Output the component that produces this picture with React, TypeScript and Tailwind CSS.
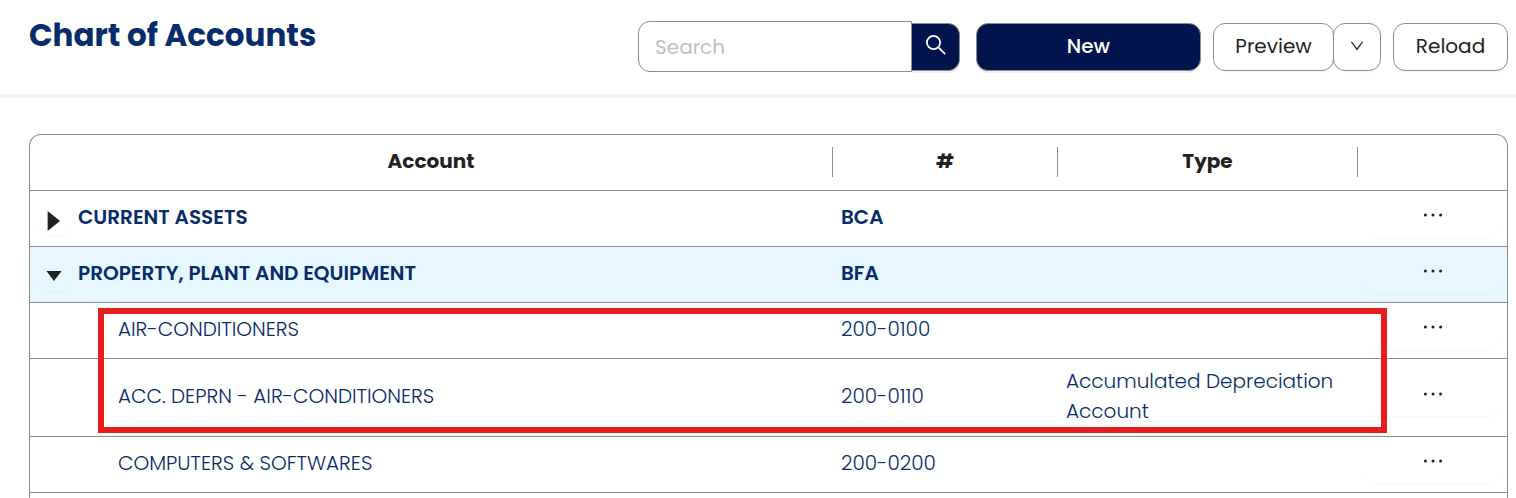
import { useState } from "react";

// ─── Data ────────────────────────────────────────────

type Account = {
  name: string;
  code: string;
  type?: string;
};

type AccountGroup = Account & { children: Account[] };

const groups: AccountGroup[] = [
  { name: "CURRENT ASSETS", code: "BCA", children: [] },
  {
    name: "PROPERTY, PLANT AND EQUIPMENT",
    code: "BFA",
    children: [
      { name: "AIR-CONDITIONERS", code: "200-0100" },
      {
        name: "ACC. DEPRN - AIR-CONDITIONERS",
        code: "200-0110",
        type: "Accumulated Depreciation Account",
      },
      { name: "COMPUTERS & SOFTWARES", code: "200-0200" },
    ],
  },
];

const cell = "h-14 border-b border-[#8c8c8c] px-2 pt-[7px] pb-[10px]";
const outlineButton =
  "h-12 rounded-xl border border-[#8c8c8c] bg-white pb-0.5 shadow-[0_2px_0_rgba(0,0,0,0.02)]";

// ─── Icons ───────────────────────────────────────────

function SearchIcon() {
  return (
    <svg className="h-5 w-5" viewBox="0 0 20 20" fill="none" stroke="currentColor" strokeWidth="1.8">
      <circle cx="7.5" cy="7.5" r="6.6" />
      <path d="M12.2 12.2 19.2 19.2" />
    </svg>
  );
}

function ChevronIcon() {
  return (
    <svg className="h-3 w-3" viewBox="0 0 12 12" fill="none" stroke="currentColor" strokeWidth="1.3">
      <path d="M0.4 1.8 6 9.4 11.6 1.8" />
    </svg>
  );
}

function DotsIcon() {
  return (
    <svg className="h-5 w-5" viewBox="0 0 20 20" fill="currentColor">
      <circle cx="2.4" cy="10" r="1.5" />
      <circle cx="10" cy="10" r="1.5" />
      <circle cx="17.6" cy="10" r="1.5" />
    </svg>
  );
}

function Triangle({ open }: { open: boolean }) {
  return (
    <svg className="h-5 w-4" viewBox="0 0 16 20" fill="currentColor">
      <path d={open ? "M0.4 4h15.2L8 14z" : "M1.6 0v20L14 10z"} />
    </svg>
  );
}

// ─── Rows ────────────────────────────────────────────

function ActionCell() {
  return (
    <td className="h-14 border-b border-[#8c8c8c] px-2 pb-2">
      <button
        type="button"
        aria-label="More actions"
        className="flex h-11 w-full items-center justify-center rounded-xl text-[#222222] shadow-[0_2px_0_rgba(0,0,0,0.02)]"
      >
        <DotsIcon />
      </button>
    </td>
  );
}

function ChildRow({ account }: { account: Account }) {
  return (
    <tr className="font-light text-[#062c6b]">
      <td className={cell}>
        <span className="block pl-20">{account.name}</span>
      </td>
      <td className={cell}>{account.code}</td>
      <td className={cell}>{account.type}</td>
      <ActionCell />
    </tr>
  );
}

// ─── Page ────────────────────────────────────────────

export default function App() {
  const [search, setSearch] = useState("");
  const [openCode, setOpenCode] = useState("BFA");

  return (
    <div className="flex h-screen flex-col overflow-hidden bg-white font-['Poppins','Inter',sans-serif] text-[20px] leading-[30px] text-[#222222]">
      <header className="flex shrink-0 items-start justify-between border-b-4 border-[#f2f2f2] pt-[21px] pr-2 pb-[22px] pl-[29px]">
        <h1 className="text-[31px] leading-7 font-bold text-[#062c6b]">Chart of Accounts</h1>

        <div className="flex items-center">
          <form className="mr-4 flex items-center" onSubmit={(e) => e.preventDefault()}>
            <input
              type="text"
              aria-label="Search"
              placeholder="Search"
              className="h-[51px] w-[274px] rounded-l-xl border border-[#8c8c8c] px-4 outline-none placeholder:text-[#bfbfbf]"
              value={search}
              onChange={(e) => setSearch(e.target.value)}
            />
            <button
              type="submit"
              aria-label="Search"
              className="flex h-12 w-12 items-center justify-center rounded-r-xl border border-l-0 border-[#8c8c8c] bg-[#00154d] pb-1 text-white shadow-[0_2px_0_rgba(0,0,0,0.06)]"
            >
              <SearchIcon />
            </button>
          </form>

          <div className="flex gap-3">
            <button
              type="button"
              className="h-12 w-[225px] rounded-xl border border-[#8c8c8c] bg-[#00154d] pb-0.5 font-medium text-white shadow-[0_2px_0_rgba(0,0,0,0.06)]"
            >
              New
            </button>
            <div className="flex">
              <button type="button" className={`${outlineButton} w-[121px]`}>
                Preview
              </button>
              <button
                type="button"
                aria-label="Preview options"
                className={`${outlineButton} -ml-px flex w-12 items-center justify-center`}
              >
                <ChevronIcon />
              </button>
            </div>
            <button type="button" className={`${outlineButton} w-[115px]`}>
              Reload
            </button>
          </div>
        </div>
      </header>

      <main className="flex min-h-0 flex-1 flex-col pt-9 pr-2 pl-[29px]">
        <div className="relative min-h-0 flex-1 rounded-t-xl border border-b-0 border-[#8c8c8c]">
          <table className="w-full table-fixed border-separate border-spacing-0">
            <colgroup>
              <col />
              <col className="w-[225px]" />
              <col className="w-[300px]" />
              <col className="w-[149px]" />
            </colgroup>
            <thead>
              <tr>
                {["Account", "#", "Type"].map((title) => (
                  <th key={title} scope="col" className="h-14 border-b border-[#8c8c8c] p-0 pb-px font-bold">
                    <div className="border-r border-[#8c8c8c] pb-0.5 leading-7">{title}</div>
                  </th>
                ))}
                <td className="h-14 border-b border-[#8c8c8c]" />
              </tr>
            </thead>
            <tbody>
              {groups.map((group) => {
                const open = group.code === openCode;
                return [
                  <tr
                    key={group.code}
                    className={open ? "bg-[#e6f7ff] font-semibold text-[#062c6b]" : "font-semibold text-[#062c6b]"}
                  >
                    <td className={cell}>
                      <div className="flex items-center gap-2">
                        <button
                          type="button"
                          aria-expanded={open}
                          aria-label={`Toggle ${group.name}`}
                          onClick={() => setOpenCode(open ? "" : group.code)}
                          className="-mb-1 flex h-8 w-8 items-center justify-center rounded-xl pt-1 text-[#222222] shadow-[0_2px_0_rgba(0,0,0,0.02)]"
                        >
                          <Triangle open={open} />
                        </button>
                        {group.name}
                      </div>
                    </td>
                    <td className={cell}>{group.code}</td>
                    <td className={cell} />
                    <ActionCell />
                  </tr>,
                  ...(open
                    ? group.children.map((account) => <ChildRow key={account.code} account={account} />)
                    : []),
                ];
              })}
            </tbody>
          </table>

          {/* Highlight around the air-conditioner accounts */}
          {openCode === "BFA" && (
            <div className="pointer-events-none absolute top-[173px] right-[120px] left-[68px] h-[125px] border-6 border-[#e81c1c]" />
          )}
        </div>
      </main>
    </div>
  );
}
